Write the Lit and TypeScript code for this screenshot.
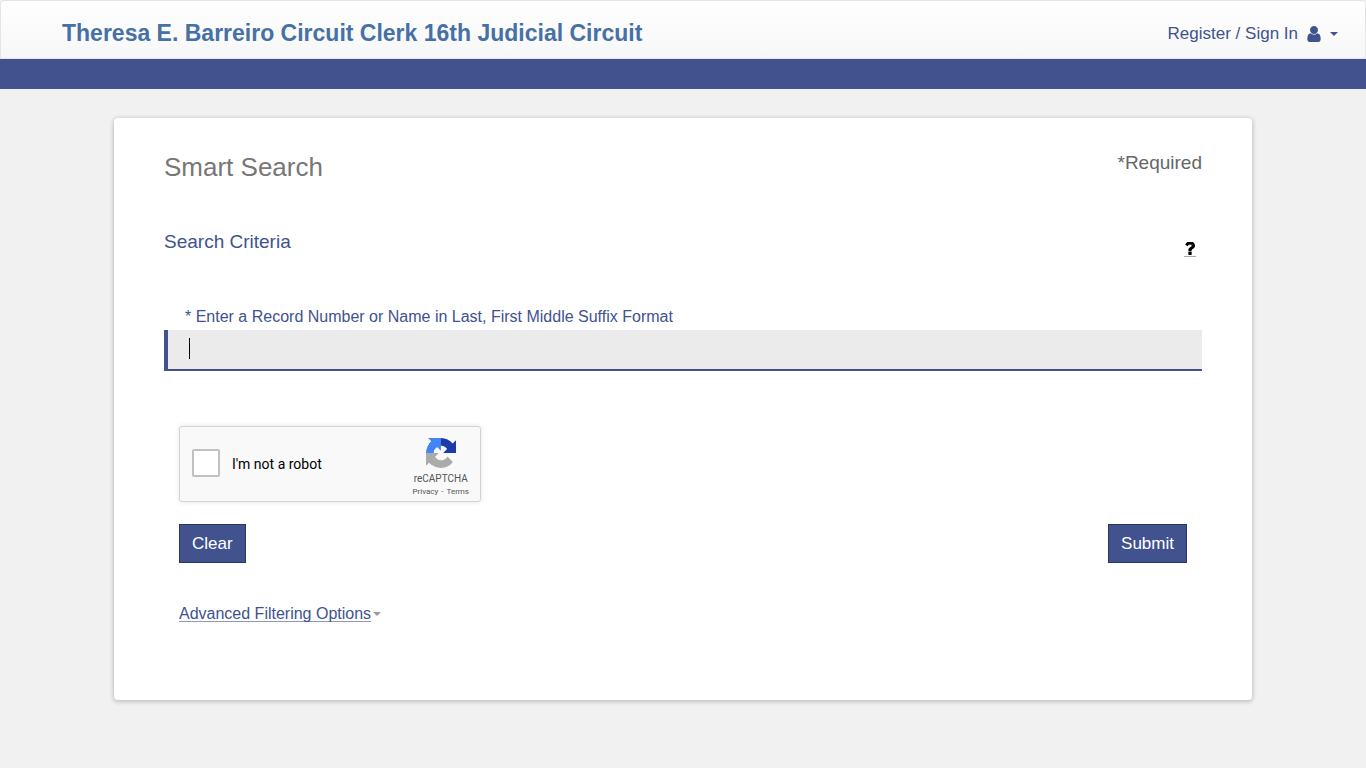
import { LitElement, html, css } from "lit";
import { customElement } from "lit/decorators.js";

@customElement("captcha-box")
class CaptchaBox extends LitElement {
  static styles = css`
    :host {
      display: flex;
      box-sizing: border-box;
      width: 302px;
      height: 76px;
      padding: 0 11px 0 12px;
      justify-content: space-between;
      border: 1px solid #d3d3d3;
      border-radius: 3px;
      background: #f9f9f9;
      box-shadow: 0 0 4px 1px rgba(0, 0, 0, 0.08);
      font-family: Roboto, "Liberation Sans", sans-serif;
    }
    .check {
      display: flex;
      align-items: center;
      gap: 12px;
      font-size: 14px;
      line-height: 18px;
      color: #000;
    }
    .box {
      appearance: none;
      box-sizing: border-box;
      width: 28px;
      height: 28px;
      margin: 0 0 2px;
      border: 2px solid #c1c1c1;
      border-radius: 2px;
      background: #fff;
    }
    .brand {
      display: flex;
      flex-direction: column;
      align-items: center;
      padding-top: 11px;
      color: #555;
    }
    .logo {
      width: 30px;
      height: 30px;
    }
    .name {
      margin-top: 5px;
      font-size: 10px;
      line-height: 12px;
    }
    .links {
      display: flex;
      gap: 3px;
      font-size: 8px;
      line-height: 14px;
    }
    .links a {
      color: inherit;
      text-decoration: none;
    }
  `;

  render() {
    return html`
      <label class="check"><input class="box" type="checkbox" />I'm not a robot</label>
      <div class="brand">
        <svg class="logo" viewBox="0 0 64 64" aria-hidden="true">
          <path fill="#1c3aa9" d="M64 31.955l-.033-1.37V4.687l-7.16 7.16C50.948 4.674 42.033.093 32.05.093c-10.4 0-19.622 4.96-25.458 12.64l11.736 11.86a15.55 15.55 0 0 1 4.754-5.334c2.05-1.6 4.952-2.906 8.968-2.906.485 0 .86.057 1.135.163 4.976.393 9.288 3.14 11.828 7.124l-8.307 8.307L64 31.953" />
          <path fill="#4285f4" d="M31.862.094l-1.37.033H4.594l7.16 7.16C4.58 13.147 0 22.06 0 32.046c0 10.4 4.96 19.622 12.64 25.458L24.5 45.768a15.55 15.55 0 0 1-5.334-4.754c-1.6-2.05-2.906-4.952-2.906-8.968 0-.485.057-.86.163-1.135.393-4.976 3.14-9.288 7.124-11.828l8.307 8.307L31.86.095" />
          <path fill="#ababab" d="M.001 32.045l.033 1.37v25.898l7.16-7.16c5.86 7.173 14.774 11.754 24.76 11.754 10.4 0 19.622-4.96 25.458-12.64l-11.736-11.86a15.55 15.55 0 0 1-4.754 5.334c-2.05 1.6-4.952 2.906-8.968 2.906-.485 0-.86-.057-1.135-.163-4.976-.393-9.288-3.14-11.828-7.124l8.307-8.307c-10.522.04-22.4.066-27.295-.005" />
        </svg>
        <div class="name">reCAPTCHA</div>
        <div class="links"><a href="#privacy">Privacy</a><span>-</span><a href="#terms">Terms</a></div>
      </div>
    `;
  }
}

@customElement("app-root")
class AppRoot extends LitElement {
  static styles = css`
    :host {
      display: block;
      min-height: 100vh;
      background: #f1f1f1;
      color: #41528f;
      font-family: "Liberation Sans", Arial, sans-serif;
      font-size: 16px;
      line-height: 24px;
    }
    a {
      color: inherit;
      text-decoration: none;
    }
    .top {
      display: flex;
      box-sizing: border-box;
      height: 59px;
      padding: 7px 27px 0 61px;
      align-items: center;
      justify-content: space-between;
      border: 1px solid #e5e5e5;
      border-radius: 4px 4px 0 0;
      background: linear-gradient(#fff, #f7f7f7);
    }
    .site {
      font-size: 23px;
      font-weight: bold;
      color: #4571a5;
    }
    .account {
      display: flex;
      align-items: center;
      gap: 9px;
      padding-top: 2px;
      font-size: 17px;
    }
    .user {
      width: 14px;
      height: 16px;
      fill: currentColor;
    }
    .caret {
      border: 4px solid transparent;
      border-top-color: currentColor;
      border-bottom: 0;
    }
    .band {
      height: 30px;
      background: #41528f;
    }
    .card {
      box-sizing: border-box;
      max-width: 1138px;
      min-height: 582px;
      margin: 29px auto 0;
      padding: 32px 50px;
      border-radius: 4px;
      background: #fff;
      box-shadow: 0 1px 4px 1px rgba(0, 0, 0, 0.2);
    }
    .row {
      display: flex;
      justify-content: space-between;
      align-items: flex-start;
    }
    h1,
    h2 {
      margin: 0;
      font-weight: normal;
    }
    h1 {
      font-size: 26px;
      line-height: 34px;
      color: #777;
    }
    .required {
      font-size: 19px;
      line-height: 26px;
      color: #666;
    }
    .criteria {
      margin-top: 46px;
      padding-right: 6px;
    }
    h2 {
      font-size: 19px;
      line-height: 24px;
    }
    .help {
      display: flex;
      margin-top: 12px;
      padding: 0 1px 1px;
      border-bottom: 1px solid #aaa;
    }
    .mark {
      width: 10px;
      height: 13px;
      fill: #000;
    }
    .label {
      display: block;
      margin-top: 48px;
      padding-left: 21px;
    }
    .query {
      display: block;
      box-sizing: border-box;
      width: 100%;
      height: 41px;
      margin-top: 1px;
      padding: 6px 21px;
      border: 0;
      border-left: 4px solid #41528f;
      border-bottom: 2px solid #41528f;
      border-radius: 0;
      outline: 0;
      background: linear-gradient(#000, #000) 21px 8px / 1px 21px no-repeat #ebebeb;
      caret-color: transparent;
      font: inherit;
      color: #333;
    }
    .below {
      padding: 55px 15px 0;
    }
    .actions {
      margin-top: 22px;
    }
    .button {
      height: 39px;
      padding: 0 12px;
      border: 1px solid #2b3763;
      border-radius: 0;
      background: #41528f;
      color: #fff;
      font: inherit;
      font-size: 17px;
    }
    .advanced {
      display: flex;
      width: fit-content;
      align-items: center;
      gap: 2px;
      margin-top: 39px;
    }
    .advanced-text {
      text-decoration: underline 1px #8f98bb;
      text-decoration-skip-ink: none;
      text-underline-offset: 2px;
    }
    .advanced .caret {
      color: #999;
    }
  `;

  render() {
    return html`
      <header>
        <div class="top">
          <a class="site" href="#home">Theresa E. Barreiro Circuit Clerk 16th Judicial Circuit</a>
          <a class="account" href="#signin">
            <span>Register / Sign In</span>
            <svg class="user" viewBox="0 128 1280 1536" aria-hidden="true">
              <path d="M1280 1399q0 109-62.5 187t-150.5 78h-854q-88 0-150.5-78t-62.5-187q0-85 8.5-160.5t31.5-152 58.5-131 94-89 134.5-34.5q131 128 313 128t313-128q76 0 134.5 34.5t94 89 58.5 131 31.5 152 8.5 160.5zm-256-887q0 159-112.5 271.5t-271.5 112.5-271.5-112.5-112.5-271.5 112.5-271.5 271.5-112.5 271.5 112.5 112.5 271.5z" />
            </svg>
            <span class="caret"></span>
          </a>
        </div>
        <div class="band"></div>
      </header>
      <main class="card">
        <div class="row">
          <h1>Smart Search</h1>
          <span class="required">*Required</span>
        </div>
        <div class="row criteria">
          <h2>Search Criteria</h2>
          <a class="help" href="#help" aria-label="Help">
            <svg class="mark" viewBox="68 256 952 1216" preserveAspectRatio="none" aria-hidden="true">
              <path d="M704 1192v240q0 16-12 28t-28 12h-240q-16 0-28-12t-12-28v-240q0-16 12-28t28-12h240q16 0 28 12t12 28zm316-600q0 54-15.5 101t-35 76.5-55 59.5-57.5 43.5-61 35.5q-41 23-68.5 65t-27.5 67q0 17-12 32.5t-28 15.5h-240q-15 0-25.5-18.5t-10.5-37.5v-45q0-83 65-156.5t143-108.5q59-27 84-56t25-76q0-42-46.5-74t-107.5-32q-65 0-108 29-35 25-107 115-13 16-31 16-12 0-25-8l-164-125q-13-10-15.5-25t5.5-28q160-266 464-266 80 0 161 31t146 83 106 127.5 41 158.5z" />
            </svg>
          </a>
        </div>
        <label class="label" for="query">* Enter a Record Number or Name in Last, First Middle Suffix Format</label>
        <input class="query" id="query" type="text" />
        <div class="below">
          <captcha-box></captcha-box>
          <div class="row actions">
            <button class="button" type="button">Clear</button>
            <button class="button" type="submit">Submit</button>
          </div>
          <a class="advanced" href="#advanced">
            <span class="advanced-text">Advanced Filtering Options</span>
            <span class="caret"></span>
          </a>
        </div>
      </main>
    `;
  }
}
